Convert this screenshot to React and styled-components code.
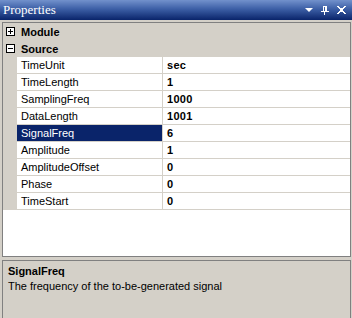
import React from "react";
import styled, { createGlobalStyle } from "styled-components";

const GlobalStyle = createGlobalStyle`
  html, body { margin: 0; padding: 0; background: #d4d0c8; overflow: hidden; }
  body { font-family: "Liberation Sans", Arial, sans-serif; font-size: 11px; color: #000; }
`;

const Window = styled.div`
  width: 352px;
  height: 318px;
  display: flex;
  flex-direction: column;
  background: #d4d0c8;
  overflow: hidden;
`;

const TitleBar = styled.div`
  height: 20px;
  flex: none;
  display: flex;
  align-items: center;
  padding: 0 6px 0 3px;
  background: linear-gradient(to bottom, #7291cc 0%, #3c5fa6 45%, #0a246a 100%);
`;

const Title = styled.span`
  font-family: "Liberation Serif", "Times New Roman", serif;
  font-size: 13px;
  color: #fff;
  line-height: 20px;
`;

const TitleButtons = styled.div`
  margin-left: auto;
  display: flex;
  align-items: center;
  gap: 8px;
`;

const Body = styled.div`
  flex: 1;
  display: flex;
  flex-direction: column;
  gap: 3px;
  padding: 2px 1px 0 2px;
`;

const Grid = styled.div`
  height: 235px;
  box-sizing: border-box;
  border: 1px solid #808080;
  background: #fff;
  flex: none;
`;

const CategoryRow = styled.div`
  height: 17px;
  display: flex;
  align-items: center;
  background: #d4d0c8;
  font-weight: bold;
  font-size: 11px;
`;

const Expander = styled.span`
  width: 9px;
  height: 9px;
  box-sizing: border-box;
  border: 1px solid #000;
  background: #fff;
  margin: 0 6px 0 3px;
  position: relative;
  &::before {
    content: "";
    position: absolute;
    left: 1px;
    top: 3px;
    width: 5px;
    height: 1px;
    background: #000;
  }
  &::after {
    content: "";
    position: absolute;
    left: 3px;
    top: 1px;
    width: 1px;
    height: 5px;
    background: #000;
    display: ${(p) => (p.$open ? "none" : "block")};
  }
`;

const PropRow = styled.div`
  height: 17px;
  display: grid;
  grid-template-columns: 14px 146px 1fr;
  background: #d4d0c8;
`;

const Cell = styled.div`
  box-sizing: border-box;
  border-bottom: 1px solid #d4d0c8;
  line-height: 16px;
  white-space: nowrap;
  overflow: hidden;
`;

const NameCell = styled(Cell)`
  border-right: 1px solid #d4d0c8;
  padding-left: 4px;
  background: ${(p) => (p.$selected ? "#0a246a" : "#fff")};
  color: ${(p) => (p.$selected ? "#fff" : "#000")};
`;

const ValueCell = styled(Cell)`
  background: #fff;
  padding-left: 4px;
  font-weight: bold;
  letter-spacing: 0.3px;
`;

const Margin = styled.div``;

const Description = styled.div`
  flex: 1;
  border: 1px solid #808080;
  border-bottom: none;
  background: #d4d0c8;
  padding: 3px 5px 0;
`;

const DescTitle = styled.div`
  font-weight: bold;
  line-height: 14px;
`;

const DescText = styled.div`
  margin-top: 1px;
  line-height: 14px;
`;

const props = [
  ["TimeUnit", "sec"],
  ["TimeLength", "1"],
  ["SamplingFreq", "1000"],
  ["DataLength", "1001"],
  ["SignalFreq", "6"],
  ["Amplitude", "1"],
  ["AmplitudeOffset", "0"],
  ["Phase", "0"],
  ["TimeStart", "0"],
];

export default function App() {
  return (
    <>
      <GlobalStyle />
      <Window>
        <TitleBar>
          <Title>Properties</Title>
          <TitleButtons>
            <svg width="8" height="4" viewBox="0 0 8 4">
              <path d="M0 0H7V1H6V2H5V3H4V4H3V3H2V2H1V1H0Z" fill="#fff" transform="translate(0.5,0)" />
            </svg>
            <svg width="8" height="9" viewBox="0 0 8 9" shapeRendering="crispEdges">
              <rect x="2" y="0" width="4" height="1" fill="#fff" />
              <rect x="2" y="0" width="1" height="5" fill="#fff" />
              <rect x="4" y="0" width="2" height="5" fill="#fff" />
              <rect x="0" y="5" width="8" height="1" fill="#fff" />
              <rect x="3" y="6" width="1" height="3" fill="#fff" />
            </svg>
            <svg width="9" height="8" viewBox="0 0 9 8" shapeRendering="crispEdges" fill="#fff">
              <path d="M0 0H2V1H3V2H6V1H7V0H9V1H8V2H7V3H6V5H7V6H8V7H9V8H7V7H6V6H3V7H2V8H0V7H1V6H2V5H3V3H2V2H1V1H0Z" />
            </svg>
          </TitleButtons>
        </TitleBar>
        <Body>
          <Grid>
            <CategoryRow>
              <Expander />
              Module
            </CategoryRow>
            <CategoryRow>
              <Expander $open />
              Source
            </CategoryRow>
            {props.map(([name, value]) => (
              <PropRow key={name}>
                <Margin />
                <NameCell $selected={name === "SignalFreq"}>{name}</NameCell>
                <ValueCell>{value}</ValueCell>
              </PropRow>
            ))}
          </Grid>
          <Description>
            <DescTitle>SignalFreq</DescTitle>
            <DescText>The frequency of the to-be-generated signal</DescText>
          </Description>
        </Body>
      </Window>
    </>
  );
}
